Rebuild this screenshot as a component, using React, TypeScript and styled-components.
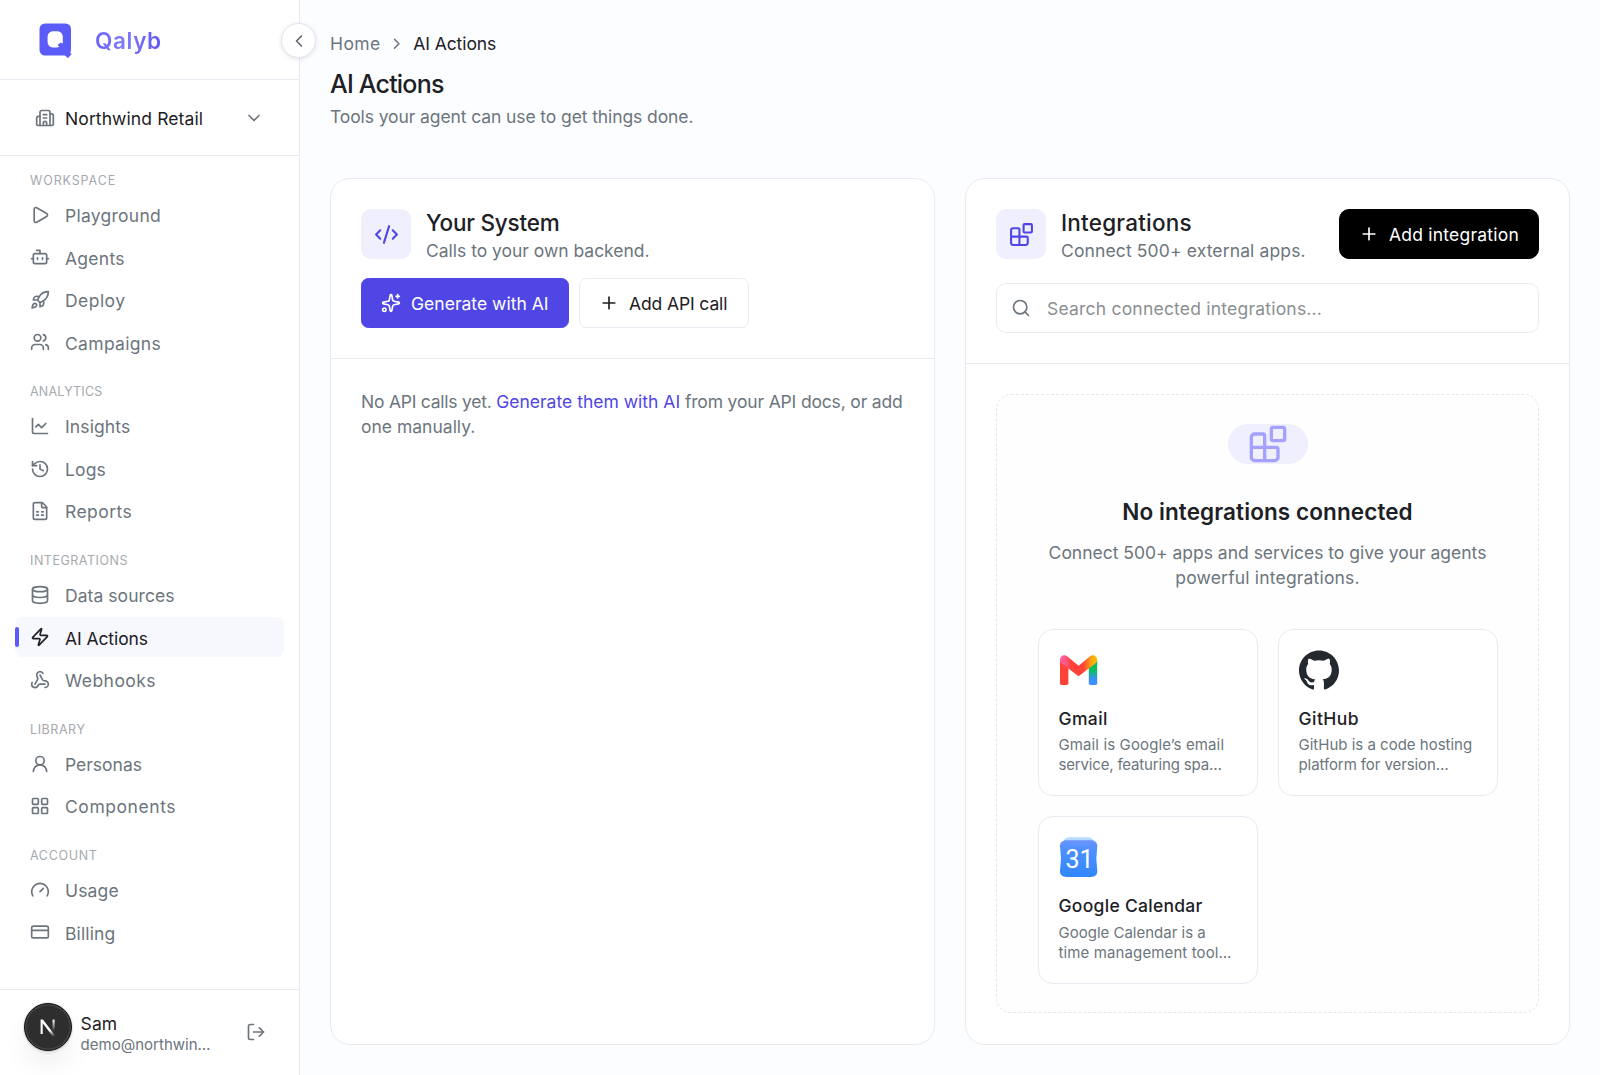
import React from "react";
import styled, { createGlobalStyle, css } from "styled-components";
import {
  Blocks, Bot, Building2, ChartLine, ChevronDown, ChevronLeft, ChevronRight, CodeXml, CreditCard,
  Database, FileSpreadsheet, Gauge, History, LayoutGrid, LogOut, Play, Plus, Rocket, Search,
  Sparkles, UserRound, Users, Webhook, Zap,
} from "lucide-react";
import type { LucideIcon } from "lucide-react";
import { SiGithub } from "react-icons/si";

const color = {
  ink: "#1d2025",
  muted: "#6c757d",
  faint: "#a6a9ae",
  line: "#e9eaf1",
  accent: "#4f46e5",
  brand: "#5b5bf7",
  tint: "#f0effe",
};

const GlobalStyle = createGlobalStyle`
  *, *::before, *::after { box-sizing: border-box; }
  body {
    margin: 0;
    background: #fcfdff;
    color: ${color.ink};
    font: 400 17.5px/25px Inter, "Liberation Sans", sans-serif;
    -webkit-font-smoothing: antialiased;
  }
  h1, h2, h3, p { margin: 0; font-weight: inherit; font-size: inherit; }
  button, input { font: inherit; color: inherit; }
`;

type Tracked = { $ls?: number };
const tracking = css<Tracked>`
  letter-spacing: ${({ $ls = 0 }) => $ls}px;
  white-space: nowrap;
`;

const Shell = styled.div`
  display: flex;
  height: 1075px;
  overflow: hidden;
`;

/* Sidebar */

const Sidebar = styled.aside`
  position: relative;
  display: flex;
  flex-direction: column;
  flex: 0 0 300px;
  background: #fff;
  border-right: 1px solid ${color.line};
`;

const BrandBar = styled.div`
  display: flex;
  align-items: center;
  gap: 23px;
  height: 80px;
  padding: 2px 0 0 39px;
  border-bottom: 1px solid ${color.line};
`;

const BrandName = styled.span<Tracked>`
  ${tracking}
  font-size: 22.5px;
  line-height: 30px;
  font-weight: 600;
  color: transparent;
  background: linear-gradient(90deg, #6a63f6 0%, #8079fb 45%, #5f56f3 100%);
  background-clip: text;
  -webkit-background-clip: text;
`;

const CollapseButton = styled.button`
  position: absolute;
  z-index: 1;
  top: 23px;
  right: -17px;
  display: grid;
  place-items: center;
  width: 35px;
  height: 35px;
  padding: 0;
  border: 1px solid #e4e5ec;
  border-radius: 50%;
  background: #fff;
  color: #5f6770;
  box-shadow: 0 1px 4px rgba(30, 35, 60, 0.12);
`;

const WorkspacePicker = styled.button`
  display: flex;
  align-items: center;
  height: 76px;
  padding: 0 35px;
  border: 0;
  border-bottom: 1px solid ${color.line};
  background: none;
  color: ${color.muted};
`;

const WorkspaceName = styled.span<Tracked>`
  ${tracking}
  flex: 1;
  padding: 2px 0 0 10px;
  text-align: left;
  color: ${color.ink};
`;

const Nav = styled.nav`
  display: flex;
  flex: 1;
  flex-direction: column;
  gap: 20px;
  padding: 15px 15px 0;
`;

const NavGroup = styled.section`
  display: flex;
  flex-direction: column;
  gap: 2.5px;
`;

const NavHeading = styled.h3<Tracked>`
  ${tracking}
  margin-bottom: 2.5px;
  padding: 2px 0 0 15px;
  font-size: 12.5px;
  line-height: 16.75px;
  color: ${color.faint};
`;

const NavItem = styled.a<{ $active?: boolean }>`
  display: flex;
  align-items: center;
  gap: 15px;
  height: 40px;
  padding-left: 15px;
  border-radius: 7.5px;
  color: ${({ $active }) => ($active ? color.ink : color.muted)};
  ${({ $active }) =>
    $active &&
    css`
      padding-left: 0;
      background: #f7f7fe;
      &::before {
        content: "";
        width: 4px;
        height: 20px;
        margin-right: -4px;
        border-radius: 2px;
        background: ${color.brand};
      }
    `}
`;

const NavLabel = styled.span<Tracked>`
  ${tracking}
  padding-top: 1.5px;
`;

const Account = styled.div`
  display: flex;
  align-items: center;
  height: 86px;
  padding: 0 33px 2px 23.5px;
  border-top: 1px solid ${color.line};
  color: ${color.muted};
`;

const Avatar = styled.div`
  display: grid;
  place-items: center;
  width: 48px;
  height: 48px;
  margin-bottom: 9px;
  border: 1px solid #151515;
  border-radius: 50%;
  background: #2e2e2e;
  box-shadow: inset 0 0 0 1.5px #454545, 0 0 0 1px rgba(0, 0, 0, 0.08), 0 2px 3px rgba(0, 0, 0, 0.08),
    0 16px 32px -8px rgba(0, 0, 0, 0.12);
`;

const AccountText = styled.div`
  flex: 1;
  padding: 4px 0 0 9px;
`;

const AccountName = styled.div<Tracked>`
  ${tracking}
  line-height: 21px;
  color: ${color.ink};
`;

const AccountMail = styled.div<Tracked>`
  ${tracking}
  font-size: 15px;
  line-height: 21px;
`;

/* Main column */

const Main = styled.main`
  display: flex;
  flex: 1;
  flex-direction: column;
  min-width: 0;
  padding: 31.25px 30px 30px;
`;

const Breadcrumb = styled.nav`
  display: flex;
  align-items: center;
  gap: 7.5px;
  color: ${color.muted};
`;

const Crumb = styled.span<Tracked & { $current?: boolean }>`
  ${tracking}
  color: ${({ $current }) => ($current ? color.ink : color.muted)};
`;

const PageTitle = styled.h1<Tracked>`
  ${tracking}
  margin-top: 12px;
  font-size: 25px;
  line-height: 32px;
  font-weight: 550;
`;

const PageIntro = styled.p<Tracked>`
  ${tracking}
  margin-top: 4px;
  color: ${color.muted};
`;

const Columns = styled.div`
  display: grid;
  grid-template-columns: repeat(2, minmax(0, 1fr));
  gap: 30px;
  margin-top: 48.75px;
`;

const Panel = styled.section`
  border: 1px solid ${color.line};
  border-radius: 20px;
  background: #fff;
`;

const PanelHead = styled.header<{ $gap: number }>`
  display: flex;
  flex-direction: column;
  gap: ${({ $gap }) => $gap}px;
  padding: 30px 30px 30px;
  border-bottom: 1px solid ${color.line};
`;

const PanelBody = styled.div`
  padding: 30px 30px 30.5px;
`;

const HeadRow = styled.div`
  display: flex;
  align-items: flex-start;
`;

const HeadText = styled.div`
  flex: 1;
  height: 53.75px;
  padding-left: 15px;
`;

const IconTile = styled.div`
  display: grid;
  place-items: center;
  width: 50px;
  height: 50px;
  border-radius: 10px;
  background: ${color.tint};
  color: ${color.accent};
`;

const PanelTitle = styled.h2<Tracked>`
  ${tracking}
  font-size: 22.5px;
  line-height: 28.75px;
  font-weight: 550;
`;

const PanelHint = styled.p<Tracked>`
  ${tracking}
  color: ${color.muted};
`;

const Actions = styled.div`
  display: flex;
  gap: 10px;
`;

type ButtonTone = "accent" | "plain" | "black";
const tones = {
  accent: css`background: ${color.accent}; border-color: ${color.accent}; color: #fff;`,
  plain: css`background: #fff; border-color: ${color.line}; color: ${color.ink};`,
  black: css`background: #000; border-color: #000; color: #fff; border-radius: 10px;`,
};

const Button = styled.button<{ $tone: ButtonTone; $width: number }>`
  display: flex;
  align-items: center;
  gap: 10px;
  width: ${({ $width }) => $width}px;
  height: 50px;
  padding: 0 0 0 19px;
  border: 1px solid;
  border-radius: 7.5px;
  ${({ $tone }) => tones[$tone]}
`;

const ButtonLabel = styled.span<Tracked>`
  ${tracking}
  padding-top: 1.5px;
`;

const SearchField = styled.label`
  display: flex;
  align-items: center;
  height: 50px;
  padding: 0 15px 0 14px;
  gap: 16px;
  border: 1px solid ${color.line};
  border-radius: 10px;
  color: ${color.muted};
`;

const SearchInput = styled.input<Tracked>`
  ${tracking}
  flex: 1;
  padding: 2px 0 0;
  border: 0;
  outline: 0;
  background: none;
  &::placeholder { color: #8b8f92; opacity: 1; }
`;

const EmptyNote = styled.p`
  color: ${color.muted};
`;

const Run = styled.span<Tracked & { $link?: boolean }>`
  ${tracking}
  ${({ $link }) => $link && css`color: ${color.accent};`}
`;

const EmptyBox = styled.div`
  display: flex;
  flex-direction: column;
  align-items: center;
  height: 619.5px;
  padding: 29px 40px 0;
  border: 1px dashed #e6e6ec;
  border-radius: 15px;
  background: #fefefe;
`;

const EmptyPill = styled.div`
  display: grid;
  place-items: center;
  width: 80px;
  height: 40px;
  border-radius: 20px;
  background: ${color.tint};
  color: #a5a1ff;
`;

const EmptyTitle = styled.h3<Tracked>`
  ${tracking}
  margin-top: 32px;
  font-size: 22.5px;
  line-height: 32px;
  font-weight: 600;
`;

const EmptyText = styled.p`
  margin: 12px 0 39px;
  text-align: center;
  color: ${color.muted};
`;

const AppGrid = styled.div`
  display: grid;
  grid-template-columns: 1fr 1fr;
  gap: 20px;
  width: 460px;
`;

const AppCard = styled.article`
  display: flex;
  flex-direction: column;
  height: 167.5px;
  padding: 20px;
  border: 1px solid ${color.line};
  border-radius: 15px;
  background: #fff;
`;

const AppLogo = styled.div`
  width: 40px;
  height: 40px;
  color: #24292f;
`;

const AppName = styled.h3<Tracked>`
  ${tracking}
  margin-top: 16px;
  font-weight: 500;
`;

const AppText = styled.p<Tracked>`
  margin-top: 4.5px;
  font-size: 15px;
  line-height: 20px;
  color: ${color.muted};
`;

const Icon = ({ of: Glyph, size = 20 }: { of: LucideIcon; size?: number }) => (
  <Glyph size={size} strokeWidth={2} />
);

const BrandMark = () => (
  <svg width="33" height="36" viewBox="0 0 33 36">
    <rect x="0.5" y="0.5" width="31.5" height="32" rx="5.5" fill={color.brand} />
    <path d="M25.5 31.8 28.2 29.5 32.6 30.6 31.8 32 28.8 35.2Z" fill={color.brand} />
    <path
      d="M14.6 8.3h3.2c3.8 0 6 2.2 6 6v4.2c0 .9-.1 1.5-.3 2.2l-1.6-1.3-3.4 2.6 1.9 1.8c-.8.4-1.7.7-2.6.7h-3.2c-3.8 0-6-2.2-6-6v-4.2c0-3.8 2.2-6 6-6Z"
      fill="#fff"
    />
  </svg>
);

const NextMark = () => (
  <svg width="24" height="24" viewBox="0 0 24 24" fill="none">
    <defs>
      <linearGradient id="stem" x1="0" y1="5" x2="0" y2="16" gradientUnits="userSpaceOnUse">
        <stop stopColor="#fff" />
        <stop offset="1" stopColor="#fff" stopOpacity="0" />
      </linearGradient>
      <linearGradient id="slash" x1="14" y1="15" x2="19" y2="21" gradientUnits="userSpaceOnUse">
        <stop stopColor="#fff" />
        <stop offset="1" stopColor="#fff" stopOpacity="0" />
      </linearGradient>
    </defs>
    <path d="M4.6 19V4.6h2.3L19.2 20.6l-1.9 1.3L6.7 8.2V19Z" fill="url(#slash)" />
    <path d="M17.6 4.6v12" stroke="url(#stem)" strokeWidth="2.1" />
  </svg>
);

const GmailLogo = () => (
  <svg width="40" height="40" viewBox="0 0 40 40">
    <defs>
      <linearGradient id="gm-band" x1="1" y1="8" x2="38.2" y2="8" gradientUnits="userSpaceOnUse">
        <stop stopColor="#ff63b0" />
        <stop offset=".13" stopColor="#ff5a88" />
        <stop offset=".3" stopColor="#ff4138" />
        <stop offset=".62" stopColor="#ff4138" />
        <stop offset=".82" stopColor="#ff9a12" />
        <stop offset="1" stopColor="#fbcb00" />
      </linearGradient>
      <linearGradient id="gm-leg" x1="0" y1="14" x2="0" y2="35" gradientUnits="userSpaceOnUse">
        <stop stopColor="#0ebc5f" />
        <stop offset=".3" stopColor="#0ebc5f" />
        <stop offset=".75" stopColor="#3c90ff" />
      </linearGradient>
    </defs>
    <path d="M1 9.5V33.2Q1 35 2.8 35H7.6Q9.4 35 9.4 33.2V10Z" fill="#ff4138" />
    <path d="M38.2 9.5V33.2Q38.2 35 36.4 35H31.6Q29.8 35 29.8 33.2V10Z" fill="url(#gm-leg)" />
    <path
      d="M1 9.6C1 5.6 5.3 4 8.1 6.3L19.6 15.7 31.1 6.3C33.9 4 38.2 5.6 38.2 9.6 38.2 11.3 37.5 12.5 36.4 13.4L19.6 26.2 2.8 13.4C1.7 12.5 1 11.3 1 9.6Z"
      fill="url(#gm-band)"
    />
  </svg>
);

const DayNumber = styled.text`
  font: 400 25px Roboto, sans-serif;
`;

const CalendarLogo = () => (
  <svg width="40" height="41" viewBox="0 0 40 41">
    <defs>
      <linearGradient id="cal" x1="0" y1="3" x2="0" y2="40" gradientUnits="userSpaceOnUse">
        <stop stopColor="#6c94ff" />
        <stop offset=".3" stopColor="#4b90ff" />
        <stop offset="1" stopColor="#3186ff" />
      </linearGradient>
    </defs>
    <path d="M4 8C4 3 6 .2 10 .2H29C33 .2 35.4 3 35.6 8Z" fill="#b5dbff" />
    <path
      d="M7.5 3.2H32C36 3.2 38.6 5.6 38.3 9.5L37.3 21.5 38.3 33.8C38.6 37.6 36 40 32 40H7.5C3.5 40 .7 37.6 1 33.8L2 21.5 1 9.5C.7 5.6 3.5 3.2 7.5 3.2Z"
      fill="url(#cal)"
    />
    <DayNumber x="20.6" y="31" textAnchor="middle" fill="#fff">31</DayNumber>
  </svg>
);

type NavEntry = [LucideIcon, string, number];
const groups: { title: string; ls: number; items: NavEntry[] }[] = [
  { title: "WORKSPACE", ls: 0.88, items: [[Play, "Playground", 0.26], [Bot, "Agents", 0.28], [Rocket, "Deploy", 0.45], [Users, "Campaigns", 0.32]] },
  { title: "ANALYTICS", ls: 0.21, items: [[ChartLine, "Insights", 0.12], [History, "Logs", 0.16], [FileSpreadsheet, "Reports", 0.44]] },
  { title: "INTEGRATIONS", ls: 0.52, items: [[Database, "Data sources", 0.06], [Zap, "AI Actions", -0.08], [Webhook, "Webhooks", 0.44]] },
  { title: "LIBRARY", ls: 0.57, items: [[UserRound, "Personas", 0], [LayoutGrid, "Components", 0.56]] },
  { title: "ACCOUNT", ls: 0.67, items: [[Gauge, "Usage", 0.15], [CreditCard, "Billing", 0.12]] },
];

type Line = [string, number];
const apps: { name: Line; logo: React.ReactNode; text: [Line, Line] }[] = [
  { name: ["Gmail", 0.36], logo: <GmailLogo />, text: [["Gmail is Google’s email", 0.12], ["service, featuring spa…", -0.17]] },
  { name: ["GitHub", 0.46], logo: <SiGithub size={40} />, text: [["GitHub is a code hosting", 0], ["platform for version…", -0.09]] },
  { name: ["Google Calendar", 0.28], logo: <CalendarLogo />, text: [["Google Calendar is a", 0], ["time management tool…", 0.12]] },
];

export default function App() {
  return (
    <>
      <GlobalStyle />
      <Shell>
        <Sidebar>
          <BrandBar>
            <BrandMark />
            <BrandName $ls={0.6}>Qalyb</BrandName>
          </BrandBar>
          <CollapseButton aria-label="Collapse sidebar"><Icon of={ChevronLeft} /></CollapseButton>
          <WorkspacePicker>
            <Icon of={Building2} />
            <WorkspaceName $ls={0.1}>Northwind Retail</WorkspaceName>
            <Icon of={ChevronDown} />
          </WorkspacePicker>
          <Nav>
            {groups.map((group) => (
              <NavGroup key={group.title}>
                <NavHeading $ls={group.ls}>{group.title}</NavHeading>
                {group.items.map(([glyph, label, ls]) => (
                  <NavItem key={label} $active={label === "AI Actions"}>
                    <Icon of={glyph} />
                    <NavLabel $ls={ls}>{label}</NavLabel>
                  </NavItem>
                ))}
              </NavGroup>
            ))}
          </Nav>
          <Account>
            <Avatar><NextMark /></Avatar>
            <AccountText>
              <AccountName $ls={0.15}>Sam</AccountName>
              <AccountMail $ls={0.02}>demo@northwin…</AccountMail>
            </AccountText>
            <Icon of={LogOut} />
          </Account>
        </Sidebar>

        <Main>
          <Breadcrumb>
            <Crumb $ls={0.42}>Home</Crumb>
            <Icon of={ChevronRight} size={17.5} />
            <Crumb $current $ls={-0.08}>AI Actions</Crumb>
          </Breadcrumb>
          <PageTitle $ls={-0.8}>AI Actions</PageTitle>
          <PageIntro $ls={-0.1}>Tools your agent can use to get things done.</PageIntro>

          <Columns>
            <Panel>
              <PanelHead $gap={15}>
                <HeadRow>
                  <IconTile><Icon of={CodeXml} size={25} /></IconTile>
                  <HeadText>
                    <PanelTitle $ls={-0.2}>Your System</PanelTitle>
                    <PanelHint $ls={-0.02}>Calls to your own backend.</PanelHint>
                  </HeadText>
                </HeadRow>
                <Actions>
                  <Button $tone="accent" $width={208}>
                    <Icon of={Sparkles} />
                    <ButtonLabel $ls={0.02}>Generate with AI</ButtonLabel>
                  </Button>
                  <Button $tone="plain" $width={170}>
                    <Icon of={Plus} />
                    <ButtonLabel $ls={-0.12}>Add API call</ButtonLabel>
                  </Button>
                </Actions>
              </PanelHead>
              <PanelBody>
                <EmptyNote>
                  <Run $ls={-0.24}>No API calls yet. </Run>
                  <Run $link $ls={0.01}>Generate them with AI</Run>
                  <Run $ls={-0.16}> from your API docs, or add</Run>
                  <br />
                  <Run>one manually.</Run>
                </EmptyNote>
              </PanelBody>
            </Panel>

            <Panel>
              <PanelHead $gap={20}>
                <HeadRow>
                  <IconTile><Icon of={Blocks} size={25} /></IconTile>
                  <HeadText>
                    <PanelTitle $ls={0.22}>Integrations</PanelTitle>
                    <PanelHint $ls={0.13}>Connect 500+ external apps.</PanelHint>
                  </HeadText>
                  <Button $tone="black" $width={200}>
                    <Icon of={Plus} />
                    <ButtonLabel $ls={0.22}>Add integration</ButtonLabel>
                  </Button>
                </HeadRow>
                <SearchField>
                  <Icon of={Search} />
                  <SearchInput $ls={0.21} placeholder="Search connected integrations..." />
                </SearchField>
              </PanelHead>
              <PanelBody>
                <EmptyBox>
                  <EmptyPill><Icon of={Blocks} size={40} /></EmptyPill>
                  <EmptyTitle $ls={0.1}>No integrations connected</EmptyTitle>
                  <EmptyText>
                    <Run $ls={-0.01}>Connect 500+ apps and services to give your agents</Run>
                    <br />
                    <Run $ls={0.18}>powerful integrations.</Run>
                  </EmptyText>
                  <AppGrid>
                    {apps.map(({ name, logo, text }) => (
                      <AppCard key={name[0]}>
                        <AppLogo>{logo}</AppLogo>
                        <AppName $ls={name[1]}>{name[0]}</AppName>
                        <AppText>
                          <Run $ls={text[0][1]}>{text[0][0]}</Run>
                          <br />
                          <Run $ls={text[1][1]}>{text[1][0]}</Run>
                        </AppText>
                      </AppCard>
                    ))}
                  </AppGrid>
                </EmptyBox>
              </PanelBody>
            </Panel>
          </Columns>
        </Main>
      </Shell>
    </>
  );
}
